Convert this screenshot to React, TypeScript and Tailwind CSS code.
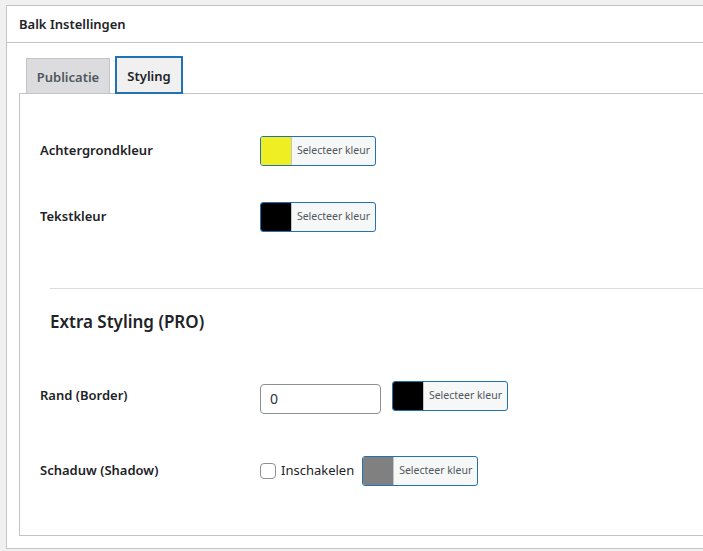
import React from 'react';

function ColorButton({ color }: { color: string }) {
  return (
    <button className="flex h-[30px] w-[116px] overflow-hidden rounded-[3px] border border-[#2271b1] bg-[#f6f7f7] p-0">
      <span className="h-full w-[30px] shrink-0" style={{ backgroundColor: color }} />
      <span className="flex h-full flex-1 items-center justify-center border-l border-[#c3c4c7] text-[10.5px] text-[#50575e]">
        Selecteer kleur
      </span>
    </button>
  );
}

function Row({ label, className, children }: { label: string; className?: string; children: React.ReactNode }) {
  return (
    <div className={'flex h-[66px] items-center ' + (className ?? '')}>
      <div className="w-[220px] shrink-0 text-[13px] font-semibold text-[#1d2327]">{label}</div>
      <div className="flex items-center">{children}</div>
    </div>
  );
}

export default function App() {
  return (
    <div className="h-[551px] w-[703px] overflow-hidden bg-[#f0f0f1] pt-[5px] pl-[6px] font-['Noto_Sans',sans-serif]">
      <div className="w-[740px] border border-[#c3c4c7] bg-white">
        <div className="flex h-[37px] items-center border-b border-[#c3c4c7] pl-[12px] pt-[2px] text-[13px] font-semibold text-[#1d2327]">
          Balk Instellingen
        </div>
        <div className="px-[12px] pb-[12px]">
          <div className="flex items-end gap-[5px] pl-[7px] pt-[13px]">
            <div className="flex h-[35px] w-[84px] items-center justify-center border border-b-0 border-[#c3c4c7] bg-[#dcdcde] pt-[3px] text-[13px] font-semibold text-[#50575e]">
              Publicatie
            </div>
            <div className="relative -mb-px flex h-[38px] w-[68px] items-center justify-center border-2 border-[#2271b1] bg-[#f0f0f1] pt-[3px] text-[13px] font-semibold text-[#1d2327]">
              Styling
            </div>
          </div>
          <div className="h-[443px] border border-[#c3c4c7] pl-[20px] pt-[24px]">
            <Row label="Achtergrondkleur">
              <ColorButton color="#eeee22" />
            </Row>
            <Row label="Tekstkleur">
              <ColorButton color="#000000" />
            </Row>
            <div className="ml-[10px] mt-[38px] h-px bg-[#dcdcde]" />
            <h2 className="ml-[10px] mt-[21px] text-[17px] leading-[24px] font-semibold text-[#1d2327]">
              Extra Styling (PRO)
            </h2>
            <Row label="Rand (Border)" className="mt-[29px]">
              <input
                type="text"
                defaultValue="0"
                className="mt-[5px] h-[30px] w-[121px] rounded-[4px] border border-[#8c8f94] bg-white px-[9px] text-[14px] text-[#2c3338]"
              />
              <span className="ml-[11px]">
                <ColorButton color="#000000" />
              </span>
            </Row>
            <Row label="Schaduw (Shadow)" className="mt-[9px]">
              <label className="flex items-center text-[13px] text-[#1d2327]">
                <span className="mr-[5px] h-[16px] w-[16px] rounded-[4px] border border-[#8c8f94] bg-white" />
                Inschakelen
              </label>
              <span className="ml-[8px]">
                <ColorButton color="#808080" />
              </span>
            </Row>
          </div>
        </div>
      </div>
    </div>
  );
}
